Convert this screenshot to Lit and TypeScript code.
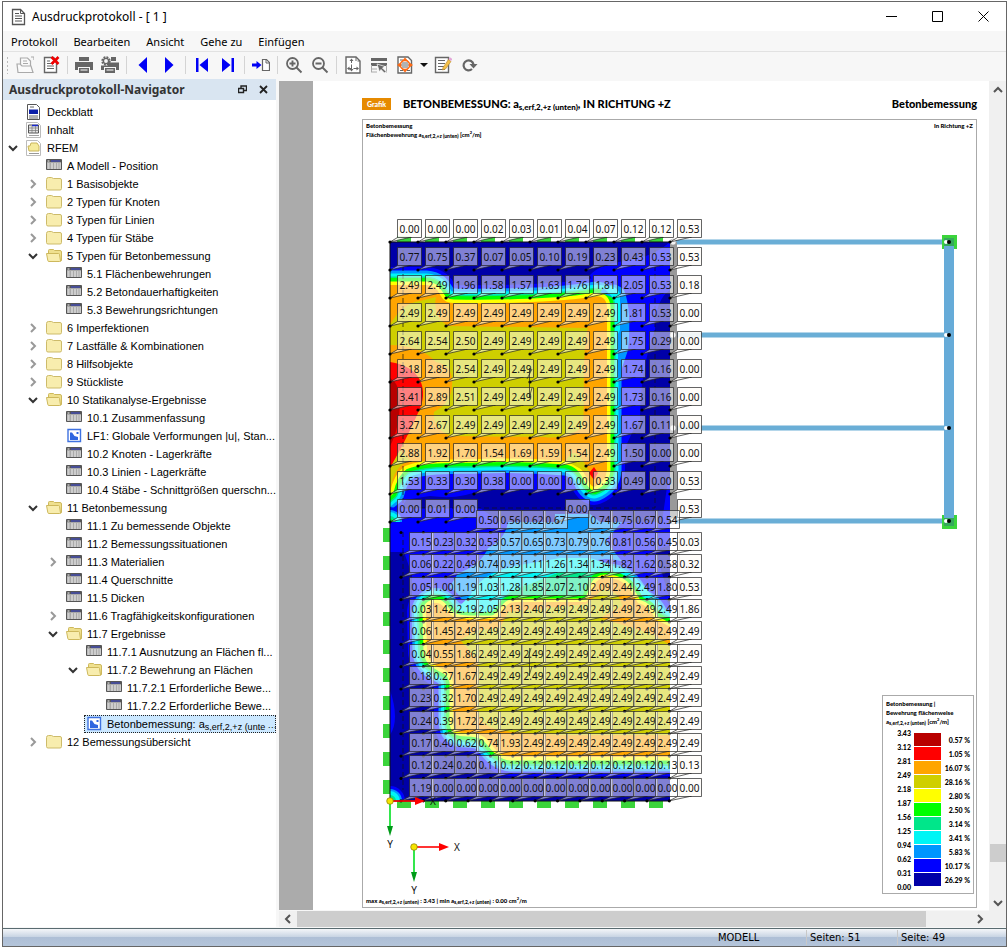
import { LitElement, html, css, svg, nothing } from "lit";
import { customElement, state } from "lit/decorators.js";

type Kind = "cover" | "toc" | "rfem" | "table" | "folder" | "open" | "image";
interface Node {
  depth: number;
  kind: Kind;
  text: unknown;
  arrow?: "open" | "closed";
  selected?: boolean;
}

const node = (depth: number, kind: Kind, text: unknown, arrow?: "open" | "closed", selected = false): Node => ({
  depth, kind, text, arrow, selected,
});

const TREE: Node[] = [
  node(0, "cover", "Deckblatt"),
  node(0, "toc", "Inhalt"),
  node(0, "rfem", "RFEM", "open"),
  node(1, "table", "A Modell - Position"),
  node(1, "folder", "1 Basisobjekte", "closed"),
  node(1, "folder", "2 Typen für Knoten", "closed"),
  node(1, "folder", "3 Typen für Linien", "closed"),
  node(1, "folder", "4 Typen für Stäbe", "closed"),
  node(1, "open", "5 Typen für Betonbemessung", "open"),
  node(2, "table", "5.1 Flächenbewehrungen"),
  node(2, "table", "5.2 Betondauerhaftigkeiten"),
  node(2, "table", "5.3 Bewehrungsrichtungen"),
  node(1, "folder", "6 Imperfektionen", "closed"),
  node(1, "folder", "7 Lastfälle & Kombinationen", "closed"),
  node(1, "folder", "8 Hilfsobjekte", "closed"),
  node(1, "folder", "9 Stückliste", "closed"),
  node(1, "open", "10 Statikanalyse-Ergebnisse", "open"),
  node(2, "table", "10.1 Zusammenfassung"),
  node(2, "image", "LF1: Globale Verformungen |u|, Stan..."),
  node(2, "table", "10.2 Knoten - Lagerkräfte"),
  node(2, "table", "10.3 Linien - Lagerkräfte"),
  node(2, "table", "10.4 Stäbe - Schnittgrößen querschn..."),
  node(1, "open", "11 Betonbemessung", "open"),
  node(2, "table", "11.1 Zu bemessende Objekte"),
  node(2, "table", "11.2 Bemessungssituationen"),
  node(2, "table", "11.3 Materialien", "closed"),
  node(2, "table", "11.4 Querschnitte"),
  node(2, "table", "11.5 Dicken"),
  node(2, "table", "11.6 Tragfähigkeitskonfigurationen", "closed"),
  node(2, "open", "11.7 Ergebnisse", "open"),
  node(3, "table", "11.7.1 Ausnutzung an Flächen fl..."),
  node(3, "open", "11.7.2 Bewehrung an Flächen", "open"),
  node(4, "table", "11.7.2.1 Erforderliche Bewe..."),
  node(4, "table", "11.7.2.2 Erforderliche Bewe..."),
  node(3, "image", html`Betonbemessung: a<sub>s,erf,2,+z (unte ···</sub>`, undefined, true),
  node(1, "folder", "12 Bemessungsübersicht", "closed"),
];

const COLORS = ["#b80000", "#ff0000", "#ffa500", "#cfcf00", "#ffff00", "#00ff00", "#00e68a", "#00f5f5", "#0096ff", "#0000ff", "#0000a8"];
const LIMITS = ["3.43", "3.12", "2.81", "2.49", "2.18", "1.87", "1.56", "1.25", "0.94", "0.62", "0.31", "0.00"];
const SHARES = ["0.57", "1.05", "16.07", "28.16", "2.80", "2.50", "3.14", "3.41", "5.83", "10.17", "26.29"];

/* Result values of the upper surface, one string per mesh row; "-" is an empty place. */
const UPPER = [
  "0.00 0.00 0.00 0.02 0.03 0.01 0.04 0.07 0.12 0.12 0.53",
  "0.77 0.75 0.37 0.07 0.05 0.10 0.19 0.23 0.43 0.53 0.53",
  "2.49 2.49 1.96 1.58 1.57 1.63 1.76 1.81 2.05 0.53 0.18",
  "2.49 2.49 2.49 2.49 2.49 2.49 2.49 2.49 1.81 0.53 0.00",
  "2.64 2.54 2.50 2.49 2.49 2.49 2.49 2.49 1.75 0.29 0.00",
  "3.18 2.85 2.54 2.49 2.49 2.49 2.49 2.49 1.74 0.16 0.00",
  "3.41 2.89 2.51 2.49 2.49 2.49 2.49 2.49 1.73 0.16 0.00",
  "3.27 2.67 2.49 2.49 2.49 2.49 2.49 2.49 1.67 0.11 0.00",
  "2.88 1.92 1.70 1.54 1.69 1.59 1.54 2.49 1.50 0.00 0.00",
  "1.53 0.33 0.30 0.38 0.00 0.00 0.00 0.33 0.49 0.00 0.53",
  "0.00 0.01 0.00 - - - 0.00 - - - 0.53",
];

const LOWER = [
  "- - - 0.50 0.56 0.62 0.67 - 0.74 0.75 0.67 0.54 -",
  "0.15 0.23 0.32 0.53 0.57 0.65 0.73 0.79 0.76 0.81 0.56 0.45 0.03",
  "0.06 0.22 0.49 0.74 0.93 1.11 1.26 1.34 1.34 1.82 1.62 0.58 0.32",
  "0.05 1.00 1.19 1.03 1.28 1.85 2.07 2.10 2.09 2.44 2.49 1.80 0.53",
  "0.03 1.42 2.19 2.05 2.13 2.40 2.49 2.49 2.49 2.49 2.49 2.49 1.86",
  "0.06 1.45 2.49 2.49 2.49 2.49 2.49 2.49 2.49 2.49 2.49 2.49 2.49",
  "0.04 0.55 1.86 2.49 2.49 2.49 2.49 2.49 2.49 2.49 2.49 2.49 2.49",
  "0.18 0.27 1.67 2.49 2.49 2.49 2.49 2.49 2.49 2.49 2.49 2.49 2.49",
  "0.23 0.32 1.70 2.49 2.49 2.49 2.49 2.49 2.49 2.49 2.49 2.49 2.49",
  "0.24 0.39 1.72 2.49 2.49 2.49 2.49 2.49 2.49 2.49 2.49 2.49 2.49",
  "0.17 0.40 0.62 0.74 1.93 2.49 2.49 2.49 2.49 2.49 2.49 2.49 2.49",
  "0.12 0.24 0.20 0.11 0.12 0.12 0.12 0.12 0.12 0.12 0.12 0.13 0.13",
  "1.19 0.00 0.00 0.00 0.00 0.00 0.00 0.00 0.00 0.00 0.00 0.00 0.00",
];

const range = (n: number) => Array.from({ length: n }, (_, i) => i);

/* One value box with its pointer to the mesh node at (ax, ay). */
const flag = (x: number, y: number, ax: number, ay: number, value: string, white: boolean) => svg`
  <path class=${white ? "flag solid" : "flag"} d="M${x} ${y}h24v18h-12L${ax} ${ay}L${x} ${y + 18}z"/>
  <path class="edge" d="M${x} ${y + 18}h14"/>
  <circle cx=${ax} cy=${ay} r="1.6"/>
  <text class="value" x=${x + 12} y=${y + 13}>${value}</text>`;

const mesh = (rows: string[], x0: number, y0: number, step: number, dx: number, dy: number, firstWhite: boolean) =>
  rows.map((row, j) => row.split(" ").map((v, i, all) => {
    if (v === "-") return nothing;
    const ax = x0 + i * step;
    const ay = y0 + j * step;
    return flag(Math.round(ax + dx) + 0.5, Math.round(ay + dy) + 0.5, ax, ay, v, i === all.length - 1 || (firstWhite && j === 0));
  }));

const UP_EDGE = "M380 285H426C444 286 436 303 454 303C500 304 560 302 590 297Q607 293 607 308V470Q606 482 594 487C586 484 586 464 566 461C540 459 510 458 480 459S425 458 405 466Q394 474 390 492L380 500z";
const LOW_EDGE = "M426 612C427 602 437 600 443 606C450 616 455 619 470 619H492C504 616 502 602 516 602H586C594 596 590 578 606 578C626 578 630 590 638 603Q650 606 655 619L680 632V757H512C496 757 492 742 484 737C470 728 454 740 453 722V682C450 664 430 672 427 652z";

const RIM = ["#0000ff", "#0096ff", "#00f5f5", "#00e68a", "#00ff00", "#ffff00"];
const bands = (d: string, widths: number[], first = 0) =>
  widths.map((w, i) => svg`<path d=${d} fill="none" stroke=${RIM[i + first]} stroke-width=${w} stroke-linejoin="round"/>`);

const spot = (x: number, y: number) =>
  [[15, "#0000ff"], [12, "#0096ff"], [10, "#00f5f5"], [6, "#00e68a"], [3, "#00ff00"]].map(
    ([r, c]) => svg`<circle cx=${x} cy=${y} r=${r} fill=${c}/>`);

const drawing = svg`
  <defs>
    <clipPath id="up"><path d="M390 242H670V522H390z"/></clipPath>
    <clipPath id="low"><path d="M390 522H670V801H390z"/></clipPath>
  </defs>
  <g fill="#3bd43b">
    ${range(10).map((k) => svg`<path d="M${397 + 28 * k} 236h14v6h-14zM${397 + 28 * k} 801h14v7h-14zM383 ${528 + 28 * k}h7v14h-7z"/>`)}
  </g>
  <path d="M674 242H949M674 335H949M674 428H949M674 521H949" stroke="#6aaed6" stroke-width="5"/>
  <path d="M942 235h15v14h-15zM942 515h15v14h-15z" fill="#3bd43b"/>
  <path d="M949 242V522" stroke="#66abd8" stroke-width="10"/>
  <path d="M944 238h10v8h-10zM944 518h10v8h-10z" fill="#36a85c"/>
  ${[242, 335, 428, 521].map((y) => svg`<circle cx="946" cy=${y} r="2" fill="#fff"/><circle cx="949" cy=${y} r="2"/>`)}
  <path d="M669 242h8v280h-8z" fill="#999"/>

  <g clip-path="url(#up)">
    <path d="M390 242h280v280H390z" fill="#0000a8"/>
    <path d="M590 275C610 255 640 268 670 242V290Q655 300 655 330Q640 370 640 420Q625 440 620 470L600 300z" fill="#00f"/>
    <path d="M390 480Q420 465 480 475L520 476Q560 470 580 490L480 490Q460 500 430 496L404 500L404 508H480L500 522H390z" fill="#00f"/>
    <path d="M555 514H590L600 522H555z" fill="#0096ff"/>
    <path d="M668 480H670V522H662z" fill="#00f"/>
    ${bands(UP_EDGE, [36, 29, 23, 17, 14, 7])}
    <path d="M600 292Q612 278 624 290Q632 310 628 350L618 380V300z" fill="#0096ff"/>
    <path d="M604 288Q614 282 620 294V330L615 340V300z" fill="#00f5f5"/>
    <path d=${UP_EDGE} fill="#ffa500"/>
    <path d="M390 325Q402 303 420 301L436 297Q432 316 448 326L588 328Q583 345 584 400L583 428Q560 440 545 437L450 436Q432 428 434 412Q452 402 452 385Q454 366 436 362Q420 345 390 345z" fill="#cfcf00"/>
    <path d="M390 490Q394 466 410 460L398 448L390 468zM566 461Q575 440 590 474z" fill="#cfcf00"/>
    <path d="M390 362Q412 365 420 380Q427 395 418 413Q406 440 390 468z" fill="#f00"/>
    <path d="M390 378Q400 384 400 402Q399 430 390 446z" fill="#b80000"/>
    <path d="M594 467l4 6l-4 7l-5-7z" fill="#f00"/>
    ${spot(390, 522)}
  </g>
  <g clip-path="url(#low)">
    <path d="M390 522h280v279H390z" fill="#0000a8"/>
    <path d="M390 522H670V545L655 550L670 600H640L560 700H450L412 640V575L404 552H390zM390 690Q400 720 390 735z" fill="#00f"/>
    <path d="M442 600L458 573Q480 566 488 548Q505 540 508 522H622L606 540Q618 560 640 578L662 600L670 640L460 640z" fill="#0096ff"/>
    ${bands(LOW_EDGE, [38, 29, 24, 18])}
    <path d="M450 615L470 596Q480 572 520 565L560 558H590Q620 566 640 582L658 602L665 640H460z" fill="#00f5f5"/>
    <path d="M494 612Q500 592 530 584L560 572H612L640 592L650 640H500z" fill="#00e68a"/>
    ${bands(LOW_EDGE, [14, 7], 4)}
    <path d=${LOW_EDGE} fill="#ffa500"/>
    <path d="M508 612L586 604L602 590Q620 590 622 606L600 618L652 634L670 645V735H560L512 732Q476 730 477 705L478 660L460 640L478 630L500 628z" fill="#cfcf00"/>
    ${spot(390, 801)}
  </g>
  <g fill="none" stroke="#111" stroke-width="1">
    <path d="M390 242H670M390 242V522M390 522V801H670"/>
    <path d="M403 250V508M655 250V508M404 508H655M403 532V790" stroke-dasharray="5 3" stroke-width=".7"/>
  </g>
  ${range(12).map((i) => svg`<circle cx=${401 + i * 22.36} cy="532.5" r="1.5"/>`)}
  <g fill="#f4f4f4" stroke="#999" stroke-width=".5">
    ${[242, 335, 428, 521].map((y) => svg`<circle cx="673" cy=${y} r="3"/>`)}
  </g>
  ${mesh(UPPER, 390, 242, 28, 7, -23, true)}
  ${mesh(LOWER, 401, 532.5, 22.36, 8, -23, false)}
  <path class="thin" d="M529.5 368V398M532 369l-5 10M532 388l-3 10M529.5 648V676M531 648l-3 10M532 666l-3 10"/>
  ${[[390, 801], [414, 847]].map(([x, y]) => svg`
    <path d="M${x} ${y}H${x + 26}" stroke="#f00" stroke-width="1.6"/>
    <path d="M${x + 25} ${y - 4}L${x + 35} ${y}L${x + 25} ${y + 4}z" fill="#f00"/>
    <path d="M${x} ${y}V${y + 26}" stroke="#00e020" stroke-width="1.6"/>
    <path d="M${x - 3} ${y + 25}L${x} ${y + 35}L${x + 3} ${y + 25}z" fill="#009a18"/>
    <circle cx=${x} cy=${y} r="3.3" fill="#f5e400" stroke="#8a7a00" stroke-width=".7"/>
    <text class="axis" x=${x + 43} y=${y + 4}>X</text>
    <text class="axis" x=${x} y=${y + 47}>Y</text>`)}
`;

const G = "#666";
const page = svg`<path d="M2.5 1.5h9l3 3v12h-12z" fill="#fff" stroke=${G} stroke-width="1.4"/>`;
const ICONS: Record<string, unknown> = {
  doc: svg`<path d="M2.5 1.5h8l4 4v11h-12z" fill="#fff" stroke="#555" stroke-width="1.3"/><path d="M10.5 1.5v4h4M5 5.5h4M5 8h7M5 10.5h7M5 13h7" fill="none" stroke="#555"/>`,
  openDoc: svg`<g fill="#fafafa" stroke="#aaa" stroke-width="1.2"><path d="M4.500 2h7l3 3v8h-10z"/><path d="M7 5h4M7 7.500h5"/><path d="M1 8h3l2 2h9l2 6.500H2z"/><path d="M15 1h3M18 1v3"/></g>`,
  delDoc: svg`${page}<path d="M5 7.500h7M5 10h7M5 12.500h7M5 5h3" stroke=${G} stroke-width="1.2"/><path d="M9.500 1l7 7M16.500 1l-7 7" stroke="#f00000" stroke-width="2.6"/>`,
  print: svg`<path d="M4 1h10v4H4zM0 6h18v8h-3v-3H3v3H0zM4 12h10v5H4z" fill=${G}/><path d="M5.500 14h7" stroke="#fff"/>`,
  printSet: svg`<path d="M10 1h5v4h-5zM7 6.500h11V14h-3v-3H3v3H0V9.500h7zM4 12h10v5H4z" fill=${G}/><circle cx="5" cy="5" r="3.400" fill="none" stroke=${G} stroke-width="2.600" stroke-dasharray="1.700 .97"/><circle cx="5" cy="5" r="2.600" fill="#f7f7f7" stroke=${G} stroke-width="1.400"/><path d="M5.500 14h7" stroke="#fff"/>`,
  prev: svg`<path d="M13 1v16L4.500 9z" fill="#0000f5"/>`,
  next: svg`<path d="M5 1v16L13.500 9z" fill="#0000f5"/>`,
  first: svg`<path d="M3 2h2.500v14H3zM15 2v14L6.500 9z" fill="#0000f5"/>`,
  last: svg`<path d="M12.500 2H15v14h-2.500zM3 2v14L11.500 9z" fill="#0000f5"/>`,
  goto: svg`<path d="M0 7.500h4.500V5L9.500 9l-5 4v-2.500H0z" fill="#0000f5"/><path d="M10.500 14.500V3.500h4l3 3v8z" fill="#fff" stroke=${G} stroke-width="1.200"/><path d="M14 3.500v3.500h3.500" fill="none" stroke=${G}/>`,
  zoomIn: svg`<circle cx="7.500" cy="7.500" r="5.500" fill="none" stroke=${G} stroke-width="1.800"/><path d="M4.500 7.500h6M7.500 4.500v6M11.500 11.500l5 5" stroke=${G} stroke-width="1.900"/>`,
  zoomOut: svg`<circle cx="7.500" cy="7.500" r="5.500" fill="none" stroke=${G} stroke-width="1.800"/><path d="M4.500 7.500h6M11.500 11.500l5 5" stroke=${G} stroke-width="1.900"/>`,
  fit: svg`<path d="M2 1h10l4 4v12H2z" fill="#fff" stroke=${G} stroke-width="1.400"/><path d="M12 1v4h4M7.500 3v12M4 12.500h10" fill="none" stroke=${G} stroke-dasharray="4 1.500"/><path d="M5.500 5l2-2.500 2 2.500zM5.500 13l2 2.500 2-2.500zM12.500 10.500l2.500 2-2.500 2zM5.500 10.500l-2.500 2 2.500 2z" fill=${G}/>`,
  select: svg`<path d="M1 2h16v3H1zM1 7h16v3H1z" fill=${G}/><path d="M1.500 9v7.500M16.500 9v7.500M2 13h5M2 16h5" stroke="#aaa"/><path d="M7 8l8 2.500-2.500 1.500 3.500 3.500-1.500 1.500-3.500-3.500L9.500 16z" fill=${G} stroke="#fff" stroke-width=".7"/>`,
  center: svg`<path d="M2 1h10l3.500 3.500V17H2z" fill="#fff" stroke=${G} stroke-width="1.400"/><path d="M4 4h3M4 14.500h3M11 14.500h3M5 9h8M6 7h6M6 11h6" stroke=${G}/><circle cx="9" cy="9" r="4.600" fill="none" stroke="#ff6a13" stroke-width="1.600"/><path d="M6 5L9 1.500 12 5zM6 13L9 16.500l3-3.500zM4.500 6.500L1 9l3.500 2.500zM13.500 6.500L17 9l-3.500 2.500z" fill="#ff6a13"/>`,
  edit: svg`<path d="M1.500 1.500h13v15h-13z" fill="#fff" stroke=${G} stroke-width="1.400"/><path d="M4 4.500h7M4 7.500h7M4 10.500h6M4 13.500h7" stroke=${G}/><path d="M9 11.500l5.500-8 2.500 2-5.500 7.500-3 1z" fill="#f5c04a" stroke="#b88a2a" stroke-width=".6"/><path d="M14.500 3L16 1.200 18.300 3 17 5z" fill="#e3a6d8"/>`,
  reload: svg`<path d="M12 13A5 5 0 1 1 13.500 8.500" fill="none" stroke=${G} stroke-width="2.200"/><path d="M9.500 8h8l-4 4.500z" fill=${G}/>`,
  cover: svg`<path d="M1.500 .5h9l3 3v12h-12z" fill="#fff" stroke="#555"/><path d="M3 5.500h9v4.500H3z" fill="#0c1fa8"/><path d="M4 3h4M3 12h9M3 14h9" stroke="#666"/>`,
  toc: svg`<path d="M.5 .5h11l3 3v12H.5z" fill="#fff" stroke="#bbb"/><path d="M2.500 3h10v8h-10z" fill="#e4e4e4" stroke="#555"/><path d="M6 3.500h6" stroke="#1a2ad0" stroke-width="1.500"/><path d="M3 6h10M3 8.500h10M6 4v7M9.500 4v7M3 13.500h10" stroke="#777" stroke-width=".7"/>`,
  rfem: svg`<path d="M.5 .5h11l3 3v12H.5z" fill="#fff" stroke="#bbb"/><path d="M2 6h2l1-3h6l2 3v5H3z" fill="#f5eb9c" stroke="#c9b55a"/><path d="M3 13.500h10" stroke="#999"/>`,
  table: svg`<path d="M.5 1.500h15v10H.5z" fill="#a9a9a9" stroke="#555"/><path d="M1 2h14v2H1z" fill="#555"/><path d="M1.500 3h2" stroke="#fff"/><path d="M5 3h9" stroke="#3a49d8"/><path d="M1.500 6h2M5 6h2M8 6h2M11 6h1.500M13.500 6h1.500M1.500 8h2M5 8h2M8 8h2M11 8h1.500M13.500 8h1.500M1.500 10h2M5 10h2M8 10h2M11 10h1.500M13.500 10h1.500" stroke="#f2f2f2" stroke-width="1.200"/>`,
  folder: svg`<path d="M.5 3.500q0-2 2-2h3l2 1h6.500q1.500 0 1.500 1.500v8.500q0 1.500-1.500 1.500H2q-1.500 0-1.500-1.500z" fill="#f8edae" stroke="#cdbb6a"/>`,
  open: svg`<path d="M2.500 5V2.500q0-1 1-1h4l1 1h5.500q1.500 0 1.500 1.500v8q0 1-1 1.500" fill="#efe08e" stroke="#cdb85c"/><path d="M.5 5.500h12q1 0 1 1l1 6.500q0 .5-1 .5H3q-1 0-1.200-1z" fill="#f8edae" stroke="#cdb85c"/>`,
  image: svg`<path d="M2 1.500h12.500v12H2z" fill="#fff" stroke="#3f72e0" stroke-width="1.400"/><path d="M4 4.500h2l2.500 3.500 3.500 1v3H4z" fill="#2f66e0"/><path d="M10.500 4h2v2h-2z" fill="#2f66e0"/>`,
};
const icon = (name: string, size = 18) => html`<svg class="icon" width=${size} height=${size} viewBox="0 0 18 18" aria-hidden="true">${ICONS[name]}</svg>`;
const treeIcon = (name: string) => html`<svg class="icon" width="16" height="17" viewBox="0 0 16 17" aria-hidden="true">${ICONS[name]}</svg>`;
const chevron = (dir: "up" | "down" | "left" | "right") => {
  const d = { up: "M1 7l4-4 4 4", down: "M1 3l4 4 4-4", left: "M7 1L3 5l4 4", right: "M3 1l4 4-4 4" }[dir];
  return html`<svg class="icon" width="10" height="10" viewBox="0 0 10 10" aria-hidden="true"><path d=${d} fill="none" stroke="currentColor" stroke-width="2"/></svg>`;
};

const TOOLS: [string, string][][] = [
  [["openDoc", "Öffnen"], ["delDoc", "Löschen"]],
  [["print", "Drucken"], ["printSet", "Druckeinstellungen"]],
  [["prev", "Zurück"], ["next", "Vor"]],
  [["first", "Anfang"], ["last", "Ende"]],
  [["goto", "Gehe zu Seite"]],
  [["zoomIn", "Vergrößern"], ["zoomOut", "Verkleinern"]],
  [["fit", "Ganze Seite"], ["select", "Auswählen"], ["center", "Zentrieren"], ["caret", "Mehr"], ["edit", "Bearbeiten"], ["reload", "Aktualisieren"]],
];

@customElement("app-root")
export class AppRoot extends LitElement {
  @state() private current = TREE.findIndex((n) => n.selected);

  static styles = css`
    :host { display: block; height: 100vh; box-sizing: border-box; padding: 1px 1px 1px 2px; background: #fff;
      font: 11px/18px "Noto Sans", "Open Sans", sans-serif; color: #000; }
    * { box-sizing: border-box; }
    button { font: inherit; color: inherit; background: none; border: 0; padding: 0; display: flex; align-items: center; justify-content: center; }
    .icon { display: block; flex: none; }
    .window { height: 100%; display: flex; flex-direction: column; border: 1px solid #666; background: #f7f7f7; }
    .title { display: flex; align-items: center; height: 29px; background: #fff; padding-left: 7px; gap: 4px; font-size: 12px; }
    .title h1 { flex: 1; margin: 0; font: inherit; }
    .title button { width: 46px; height: 30px; }
    .menu { display: flex; gap: 16px; padding: 2px 8px 0; height: 21px; align-items: center; border-bottom: 1px solid #e2e2e2; }
    .menu button { height: 18px; }
    .tools { display: flex; align-items: center; height: 27px; padding-bottom: 1px; }
    .grip { width: 9px; height: 18px; background: radial-gradient(circle, #bbb 1px, transparent 1px) 0 0 / 9px 4px; }
    .tool { width: 26px; height: 26px; }
    .tool.caret { width: 12px; }
    .caret::after { content: ""; border: 4px solid transparent; border-top-color: #111; margin-top: 4px; }
    .sep { width: 1px; height: 18px; margin: 0 3px; background: #d4d4d4; }
    .main { flex: 1; min-height: 0; display: flex; gap: 3px; }
    nav { width: 273px; flex: none; background: #fff; display: flex; flex-direction: column; min-height: 0; }
    .dock { display: flex; align-items: center; height: 21px; background: #d9e5f1; padding: 0 2px 0 6px; color: #333; }
    .dock h2 { flex: 1; margin: 0; font-size: 12px; line-height: 21px; font-weight: 700; }
    .dock button { width: 21px; height: 21px; }
    ul { list-style: none; margin: 0; padding: 3px 0 0; overflow: hidden; font: 11px/18px "Liberation Sans", Arial, sans-serif; }
    li { display: flex; height: 18px; padding-left: 1px; }
    .d1 { padding-left: 21px; } .d2 { padding-left: 41px; } .d3 { padding-left: 61px; } .d4 { padding-left: 81px; }
    .twist { width: 18px; flex: none; color: #999; }
    .twist.open { color: #333; }
    .item { flex: 1; min-width: 0; gap: 5px; justify-content: flex-start; margin-left: 2px; padding-left: 2px; text-align: left; height: 18px; }
    .item span { white-space: nowrap; }
    .item.selected { background: #cce8ff; outline: 1px dotted #222; outline-offset: -1px; }
    sub { font-size: 9px; line-height: 1px; vertical-align: -2px; }
    .viewer { flex: 1; min-width: 0; display: grid; grid-template: minmax(0, 1fr) 16px / minmax(0, 1fr) 17px; padding-top: 2px; }
    .canvas { background: #ababab; padding-left: 34px; overflow: hidden; display: flex; margin-bottom: 1px; }
    .sheet { flex: 1; min-width: 0; background: #fff; padding: 14px 12px 2px 49px; display: flex; flex-direction: column; font-family: Lato, "Open Sans", sans-serif; font-weight: 900; }
    .sheet header { display: flex; align-items: center; height: 24px; gap: 12px; font-size: 11px; line-height: 24px; padding-bottom: 6px; }
    .badge { background: #e68a00; color: #fff; font-size: 7px; line-height: 12px; width: 29px; text-align: center; }
    .sheet h3 { flex: 1; margin: 0; font: inherit; white-space: nowrap; }
    .sheet h3 sub { font-size: 8px; }
    .frame { position: relative; flex: 1; min-height: 0; border: 1px solid #aaa; display: flex; flex-direction: column; font-size: 6px; line-height: 9px; padding-top: 1px; }
    .frame p { margin: 0; padding: 0 3px; display: flex; justify-content: space-between; white-space: pre; }
    .frame sub { font-size: 5px; vertical-align: -1px; }
    .frame sup { font-size: 4px; line-height: 1px; }
    .plot { display: block; width: 100%; flex: 1; min-height: 0; }
    .frame .foot { height: 11px; justify-content: flex-start; }
    .flag { fill: #ffffff80; stroke: #222; stroke-width: .7; }
    .flag.solid { fill: #fffdfae6; }
    .edge, .thin { fill: none; stroke: #222; stroke-width: .7; }
    .value { font: 400 10px "Noto Sans", sans-serif; text-anchor: middle; fill: #111; }
    .axis { font: 400 10px "Noto Sans", sans-serif; text-anchor: middle; fill: #111; }
    .legend { position: absolute; right: 2px; bottom: 13px; width: 92px; height: 199px; border: 1px solid #aaa; background: #fff; padding: 3px; }
    .legend h4 { margin: 0; font: inherit; white-space: nowrap; }
    .scale { display: grid; grid-template-columns: 25px 27px 1fr; column-gap: 3px; font-size: 7px; padding-top: 7px; text-align: right; }
    .limits { margin-top: -7px; line-height: 14px; }
    .swatches { display: grid; grid-template-rows: repeat(11, 13px); row-gap: 1px; }
    .shares { line-height: 14px; }
    .track { background: #f0f0f0; display: flex; color: #555; align-items: center; }
    .track.v { flex-direction: column; }
    .track button { width: 18px; height: 17px; flex: none; }
    .track .space { flex: 762; }
    .track .thumb { background: #cdcdcd; }
    .v .thumb { flex: 18; width: 16px; } .v .rest { flex: 33; }
    .h .thumb { flex: 628; height: 16px; } .h .rest { flex: 45; }
    .corner { background: #f0f0f0; }
    footer { height: 18px; display: flex; justify-content: flex-end; align-items: center; border-top: 1px solid #596b70; margin-top: 1px;
      background: linear-gradient(#f4f6f9, #c9d5e4 45%, #aebfd6 50%, #b4c5da); font-family: "DejaVu Sans Condensed", "DejaVu Sans", sans-serif; font-stretch: condensed; }
    footer span { width: 91px; padding-left: 3px; border-left: 1px solid #c8c8c8; line-height: 15px; }
    footer .model { border: 0; }
    footer .size { width: 18px; }
  `;

  private row(n: Node, i: number) {
    return html`<li class="d${n.depth}">
      ${n.arrow
        ? html`<button class="twist ${n.arrow}" aria-label="Umschalten">${chevron(n.arrow === "open" ? "down" : "right")}</button>`
        : html`<i class="twist"></i>`}
      <button class="item ${i === this.current ? "selected" : ""}" @click=${() => (this.current = i)}>
        ${treeIcon(n.kind)}<span>${n.text}</span>
      </button>
    </li>`;
  }

  render() {
    const quantity = html`a<sub>s,erf,2,+z (unten)</sub>`;
    return html`<div class="window">
      <div class="title">
        ${icon("doc")}
        <h1>Ausdruckprotokoll - [ 1 ]</h1>
        <div class="tools">
          <button aria-label="Minimieren"><svg width="11" height="11"><path d="M0 5.500h11" stroke="#000"/></svg></button>
          <button aria-label="Maximieren"><svg width="11" height="11"><path d="M.5 .5h10v10H.5z" fill="none" stroke="#000"/></svg></button>
          <button aria-label="Schließen"><svg width="11" height="11"><path d="M.5 .5l10 10M10.500 .5l-10 10" stroke="#000"/></svg></button>
        </div>
      </div>
      <div class="menu">
        ${["Protokoll", "Bearbeiten", "Ansicht", "Gehe zu", "Einfügen"].map((m) => html`<button>${m}</button>`)}
      </div>
      <div class="tools">
        <i class="grip"></i>
        ${TOOLS.map((group, g) => html`
          ${g ? html`<i class="sep"></i>` : nothing}
          ${group.map(([name, label]) => html`<button class="tool ${name}" aria-label=${label}>${name === "caret" ? nothing : icon(name)}</button>`)}`)}
      </div>
      <div class="main">
        <nav>
          <div class="dock">
            <h2>Ausdruckprotokoll-Navigator</h2>
            <button aria-label="Lösen"><svg width="9" height="9"><path d="M3 3V1h5.500v4.500H6M.5 3.500h5v4h-5zM.5 3.500h5M3 1h5.500" fill="none" stroke="#222" stroke-width="1.400"/></svg></button>
            <button aria-label="Schließen"><svg width="9" height="9"><path d="M1 1l7 7M8 1L1 8" stroke="#222" stroke-width="1.800"/></svg></button>
          </div>
          <ul>${TREE.map((n, i) => this.row(n, i))}</ul>
        </nav>
        <div class="viewer">
          <div class="canvas">
            <article class="sheet">
              <header>
                <span class="badge">Grafik</span>
                <h3>BETONBEMESSUNG: a<sub>s,erf,2,+z (unten)</sub>, IN RICHTUNG +Z</h3>
                <span>Betonbemessung</span>
              </header>
              <div class="frame">
                <p><span>Betonbemessung</span><span>In Richtung +Z</span></p>
                <p><span>Flächenbewehrung ${quantity} [cm<sup>2</sup>/m]</span></p>
                <svg class="plot" viewBox="363 139 613 754" preserveAspectRatio="xMinYMin meet">${drawing}</svg>
                <p class="foot"><span>max ${quantity} : 3.43 | min ${quantity} : 0.00 cm<sup>2</sup>/m</span></p>
                <aside class="legend">
                  <h4>Betonbemessung |<br>Bewehrung flächenweise<br>${quantity} [cm<sup>2</sup>/m]</h4>
                  <div class="scale">
                    <div class="limits">${LIMITS.map((v) => html`<div>${v}</div>`)}</div>
                    <div class="swatches">${COLORS.map((c) => html`<i style="background:${c}"></i>`)}</div>
                    <div class="shares">${SHARES.map((v) => html`<div>${v} %</div>`)}</div>
                  </div>
                </aside>
              </div>
            </article>
          </div>
          <div class="track v">
            <button aria-label="Nach oben">${chevron("up")}</button>
            <i class="space"></i><i class="thumb"></i><i class="rest"></i>
            <button aria-label="Nach unten">${chevron("down")}</button>
          </div>
          <div class="track h">
            <button aria-label="Nach links">${chevron("left")}</button>
            <i class="thumb"></i><i class="rest"></i>
            <button aria-label="Nach rechts">${chevron("right")}</button>
          </div>
          <i class="corner"></i>
        </div>
      </div>
      <footer>
        <span class="model">MODELL</span><span>Seiten: 51</span><span>Seite: 49</span><span class="size"></span>
      </footer>
    </div>`;
  }
}
